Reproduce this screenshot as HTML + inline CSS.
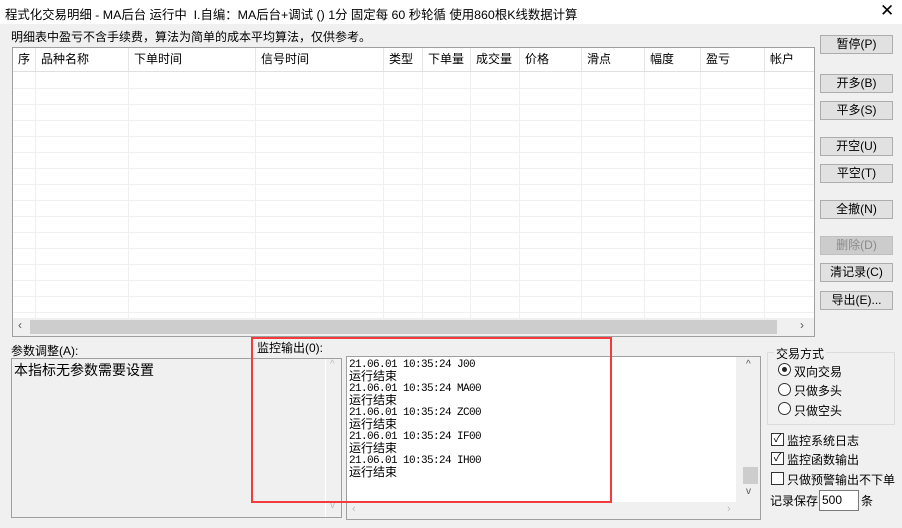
<!DOCTYPE html>
<html><head><meta charset="utf-8"><style>
*{margin:0;padding:0;box-sizing:border-box}
body{width:902px;height:528px;background:#f0f0f0;position:relative;overflow:hidden;font-family:"Liberation Sans","Noto Sans CJK SC","WenQuanYi Zen Hei",sans-serif;font-size:12px;color:#000}
.a{position:absolute;white-space:nowrap}
.btn{position:absolute;left:820px;width:73px;height:19px;background:#e1e1e1;border:1px solid #adadad;text-align:center;line-height:17px;font-size:12px}
.mono{font-family:"Liberation Mono","Noto Sans CJK SC",monospace}
.hd{position:absolute;top:0;height:23px;line-height:23px;padding-left:5px;border-right:1px solid #e5e5e5;font-size:12px}
.vl{position:absolute;top:24px;bottom:18px;width:1px;background:#f0f0f0}
.hl{position:absolute;left:0;right:0;height:1px;background:#f0f0f0}
.ln{height:12px;line-height:12px;overflow:visible;font-size:12px}
.m{font-size:11px;letter-spacing:-0.6px}
</style></head><body>
<div class="a" style="left:0;top:0;width:902px;height:24px;background:#fff"></div>
<div class="a" style="left:5px;top:5px;font-size:12.4px">程式化交易明细 - MA后台 运行中&nbsp; I.自编：MA后台+调试 () 1分 固定每 60 秒轮循 使用860根K线数据计算</div>
<div class="a" style="left:880px;top:1px;font-size:17px;font-weight:300">✕</div>
<div class="a" style="left:11px;top:28px;font-size:12px">明细表中盈亏不含手续费，算法为简单的成本平均算法，仅供参考。</div>

<div class="a" style="left:12px;top:47px;width:803px;height:290px;background:#fff;border:1px solid #a0a0a0;overflow:hidden">
 <div class="a" style="left:0;top:0;right:0;height:24px;border-bottom:1px solid #e0e0e0"></div>
 <div class="hd" style="left:0;width:23px">序</div>
 <div class="hd" style="left:23px;width:93px">品种名称</div>
 <div class="hd" style="left:116px;width:127px">下单时间</div>
 <div class="hd" style="left:243px;width:128px">信号时间</div>
 <div class="hd" style="left:371px;width:39px">类型</div>
 <div class="hd" style="left:410px;width:48px">下单量</div>
 <div class="hd" style="left:458px;width:49px">成交量</div>
 <div class="hd" style="left:507px;width:62px">价格</div>
 <div class="hd" style="left:569px;width:63px">滑点</div>
 <div class="hd" style="left:632px;width:56px">幅度</div>
 <div class="hd" style="left:688px;width:64px">盈亏</div>
 <div class="hd" style="left:752px;width:60px">帐户</div>
 <div class="vl" style="left:22px"></div><div class="vl" style="left:115px"></div><div class="vl" style="left:242px"></div><div class="vl" style="left:370px"></div><div class="vl" style="left:409px"></div><div class="vl" style="left:457px"></div><div class="vl" style="left:506px"></div><div class="vl" style="left:568px"></div><div class="vl" style="left:631px"></div><div class="vl" style="left:687px"></div><div class="vl" style="left:751px"></div>
 <div class="hl" style="top:40px"></div><div class="hl" style="top:56px"></div><div class="hl" style="top:72px"></div><div class="hl" style="top:88px"></div><div class="hl" style="top:104px"></div><div class="hl" style="top:120px"></div><div class="hl" style="top:136px"></div><div class="hl" style="top:152px"></div><div class="hl" style="top:168px"></div><div class="hl" style="top:184px"></div><div class="hl" style="top:200px"></div><div class="hl" style="top:216px"></div><div class="hl" style="top:232px"></div><div class="hl" style="top:248px"></div><div class="hl" style="top:264px"></div>
 <div class="a" style="left:0;top:270px;width:801px;height:18px;background:#f0f0f0"></div>
 <div class="a" style="left:17px;top:272px;width:747px;height:14px;background:#cdcdcd"></div>
 <div class="a" style="left:5px;top:270px;font-size:12px;color:#555">‹</div>
 <div class="a" style="left:787px;top:270px;font-size:12px;color:#555">›</div>
</div>

<div class="btn" style="top:35px">暂停(P)</div>
<div class="btn" style="top:74px">开多(B)</div>
<div class="btn" style="top:101px">平多(S)</div>
<div class="btn" style="top:137px">开空(U)</div>
<div class="btn" style="top:164px">平空(T)</div>
<div class="btn" style="top:200px">全撤(N)</div>
<div class="btn" style="top:236px;color:#8a8a8a;background:#cccccc;border-color:#bfbfbf">删除(D)</div>
<div class="btn" style="top:263px">清记录(C)</div>
<div class="btn" style="top:291px">导出(E)...</div>

<div class="a" style="left:11px;top:342px">参数调整(A):</div>
<div class="a" style="left:11px;top:358px;width:331px;height:160px;border:1px solid #a0a0a0;background:#f0f0f0"></div>
<div class="a" style="left:14px;top:360px;font-size:14px">本指标无参数需要设置</div>
<div class="a" style="left:325px;top:359px;width:1px;height:158px;background:#fff"></div>
<div class="a" style="left:330px;top:359px;font-size:10px;color:#bbb">^</div>
<div class="a" style="left:330px;top:500px;font-size:10px;color:#bbb">v</div>

<div class="a" style="left:257px;top:339px">监控输出(0):</div>
<div class="a" style="left:346px;top:356px;width:415px;height:164px;border:1px solid #a0a0a0;background:#f0f0f0"></div>
<div class="a" style="left:347px;top:357px;width:389px;height:145px;background:#fff"></div>
<div class="a" style="left:743px;top:467px;width:15px;height:17px;background:#cdcdcd"></div>
<div class="a" style="left:746px;top:359px;font-size:10px;color:#555">^</div>
<div class="a" style="left:746px;top:486px;font-size:10px;color:#555">v</div>
<div class="a" style="left:352px;top:503px;font-size:11px;color:#bbb">‹</div>
<div class="a" style="left:727px;top:503px;font-size:11px;color:#bbb">›</div>
<div class="a mono" style="left:349px;top:359px">
<div class="ln m">21.06.01 10:35:24 J00</div><div class="ln">运行结束</div>
<div class="ln m">21.06.01 10:35:24 MA00</div><div class="ln">运行结束</div>
<div class="ln m">21.06.01 10:35:24 ZC00</div><div class="ln">运行结束</div>
<div class="ln m">21.06.01 10:35:24 IF00</div><div class="ln">运行结束</div>
<div class="ln m">21.06.01 10:35:24 IH00</div><div class="ln">运行结束</div>
</div>

<div class="a" style="left:251px;top:337px;width:361px;height:166px;border:2px solid #f23c3c"></div>

<div class="a" style="left:767px;top:352px;width:128px;height:73px;border:1px solid #dcdcdc"></div>
<div class="a" style="left:774px;top:345px;background:#f0f0f0;padding:0 2px">交易方式</div>
<div class="a" style="left:778px;top:363px;width:13px;height:13px;border:1px solid #333;border-radius:50%;background:#fff"></div>
<div class="a" style="left:782px;top:367px;width:5px;height:5px;border-radius:50%;background:#222"></div>
<div class="a" style="left:778px;top:383px;width:13px;height:13px;border:1px solid #333;border-radius:50%;background:#fff"></div>
<div class="a" style="left:778px;top:402px;width:13px;height:13px;border:1px solid #333;border-radius:50%;background:#fff"></div>
<div class="a" style="left:794px;top:363px">双向交易</div>
<div class="a" style="left:794px;top:382px">只做多头</div>
<div class="a" style="left:794px;top:402px">只做空头</div>
<div class="a" style="left:771px;top:433px;width:13px;height:13px;border:1px solid #333;background:#fff;font-size:11px;line-height:11px;text-align:center">✓</div>
<div class="a" style="left:771px;top:452px;width:13px;height:13px;border:1px solid #333;background:#fff;font-size:11px;line-height:11px;text-align:center">✓</div>
<div class="a" style="left:771px;top:472px;width:13px;height:13px;border:1px solid #333;background:#fff"></div>
<div class="a" style="left:787px;top:432px">监控系统日志</div>
<div class="a" style="left:787px;top:451px">监控函数输出</div>
<div class="a" style="left:787px;top:471px">只做预警输出不下单</div>
<div class="a" style="left:770px;top:492px">记录保存</div>
<div class="a" style="left:819px;top:490px;width:40px;height:21px;border:1px solid #7a7a7a;background:#fff;padding-left:2px;line-height:19px">500</div>
<div class="a" style="left:861px;top:492px">条</div>
</body></html>
